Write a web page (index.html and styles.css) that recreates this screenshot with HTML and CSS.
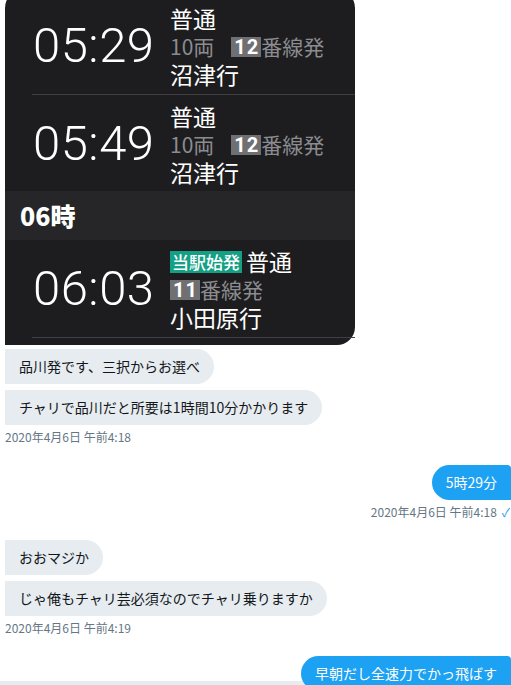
FILE: index.html
```html
<!DOCTYPE html>
<html lang="ja">
<head>
    <meta charset="UTF-8">
    <meta name="viewport" content="width=device-width, initial-scale=1.0">
    <title>DM</title>
    <link rel="stylesheet" href="styles.css">
</head>
<body>

    <div class="thread">

        <div class="msg recv">
            <div class="timetable">
                <div class="row">
                    <div class="time">05:29</div>
                    <div class="info">
                        <div class="line">普通</div>
                        <div class="line dim">10両<span class="track gap">12</span>番線発</div>
                        <div class="line">沼津行</div>
                    </div>
                </div>
                <div class="rule"></div>
                <div class="row">
                    <div class="time">05:49</div>
                    <div class="info">
                        <div class="line">普通</div>
                        <div class="line dim">10両<span class="track gap">12</span>番線発</div>
                        <div class="line">沼津行</div>
                    </div>
                </div>
                <div class="hour">06時</div>
                <div class="row">
                    <div class="time">06:03</div>
                    <div class="info">
                        <div class="line"><span class="first">当駅始発</span>普通</div>
                        <div class="line dim"><span class="track">11</span>番線発</div>
                        <div class="line">小田原行</div>
                    </div>
                </div>
                <div class="rule"></div>
            </div>
            <div class="bubble">品川発です、三択からお選べ</div>
            <div class="bubble">チャリで品川だと所要は1時間10分かかります</div>
            <div class="stamp">2020年4月6日 午前4:18</div>
        </div>

        <div class="msg sent">
            <div class="bubble">5時29分</div>
            <div class="stamp">2020年4月6日 午前4:18<span class="check">✓</span></div>
        </div>

        <div class="msg recv">
            <div class="bubble">おおマジか</div>
            <div class="bubble">じゃ俺もチャリ芸必須なのでチャリ乗りますか</div>
            <div class="stamp">2020年4月6日 午前4:19</div>
        </div>

        <div class="msg sent last">
            <div class="bubble">早朝だし全速力でかっ飛ばす</div>
        </div>

    </div>

    <div class="composer"></div>

</body>
</html>
```

FILE: styles.css
```css
body {
    margin: 0;
    padding: 0;
    background: #fff;
    overflow: hidden;
    font-family: "Noto Sans CJK JP", "Liberation Sans", sans-serif;
}

.thread {
    display: flex;
    flex-direction: column;
    gap: 20px;
    padding: 0 0 0 5px;
}

.msg {
    display: flex;
    flex-direction: column;
    gap: 6px;
}

.recv {
    align-items: flex-start;
}

.sent {
    align-items: flex-end;
}

/* screenshot of the timetable app */
.timetable {
    width: 350px;
    margin-top: -10px;
    margin-bottom: -2px;
    padding: 7px 0 7px 0;
    background: #1d1d1f;
    border-radius: 18px 18px 18px 0;
    color: #fff;
    font-family: "Noto Sans CJK JP", sans-serif;
}

.row {
    height: 97px;
    display: flex;
    align-items: center;
    padding-left: 28px;
}

.time {
    width: 137px;
    font-family: Roboto, "Noto Sans", sans-serif;
    font-weight: 300;
    font-size: 49px;
    letter-spacing: 0.5px;
    line-height: 1;
}

.info {
    display: flex;
    flex-direction: column;
}

.line {
    font-size: 23px;
    line-height: 28px;
    height: 28px;
    white-space: nowrap;
}

.dim {
    color: #8c8c90;
    font-size: 21px;
}

.track {
    display: inline-block;
    vertical-align: 1px;
    background: #707072;
    color: #fff;
    font-family: Roboto, sans-serif;
    font-weight: 700;
    font-size: 20px;
    line-height: 20px;
    padding: 0 2px 0 3px;
    letter-spacing: 1px;
}

.gap {
    margin-left: 17px;
}

.first {
    display: inline-block;
    vertical-align: 2px;
    background: #14a084;
    color: #fff;
    font-size: 17px;
    line-height: 22px;
    padding: 0 2px;
    margin-right: 4px;
    font-weight: 500;
}

.rule {
    height: 1px;
    margin-left: 27px;
    background: #404042;
}

.hour {
    height: 49px;
    line-height: 49px;
    padding-left: 15px;
    background: #262628;
    font-size: 25px;
    font-weight: 900;
    margin-top: -1px;
}

/* chat bubbles */
.bubble {
    font-size: 14px;
    line-height: 19px;
    padding: 8px 14px;
    border-radius: 0 18px 18px 0;
    background: #e6ecf0;
    color: #14171a;
    white-space: nowrap;
}

.sent .bubble {
    background: #1da1f2;
    color: #fff;
    border-radius: 18px 4px 0 18px;
}

.stamp {
    margin-top: -2px;
    font-size: 12px;
    line-height: 16px;
    color: #657786;
}

.sent .stamp {
    padding-right: 1px;
}

.check {
    color: #1da1f2;
    margin-left: 5px;
}

.composer {
    position: fixed;
    left: 0;
    right: 0;
    bottom: 0;
    height: 4px;
    background: #e6ecf0;
}

.last .bubble {
    position: relative;
    z-index: 1;
}
```
